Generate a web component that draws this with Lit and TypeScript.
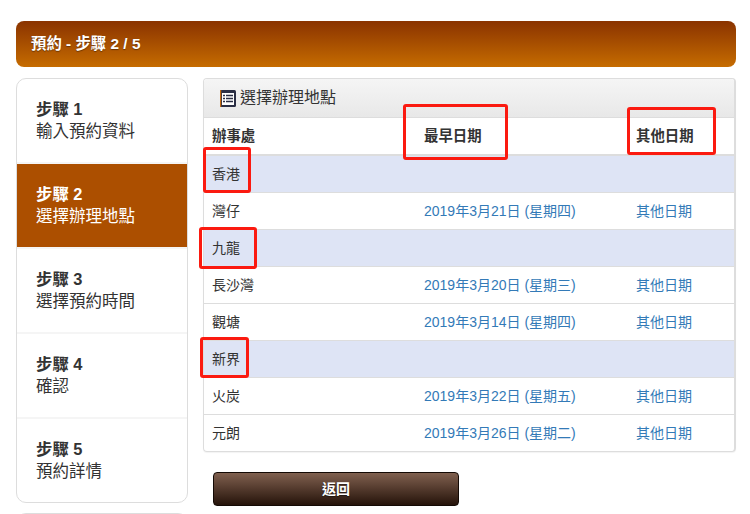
import { LitElement, html, css } from "lit";
import { customElement } from "lit/decorators.js";

const steps = [
  ["步驟 1", "輸入預約資料"],
  ["步驟 2", "選擇辦理地點"],
  ["步驟 3", "選擇預約時間"],
  ["步驟 4", "確認"],
  ["步驟 5", "預約詳情"],
];

type Row = { group: string } | { name: string; date: string };
const rows: Row[] = [
  { group: "香港" },
  { name: "灣仔", date: "2019年3月21日 (星期四)" },
  { group: "九龍" },
  { name: "長沙灣", date: "2019年3月20日 (星期三)" },
  { name: "觀塘", date: "2019年3月14日 (星期四)" },
  { group: "新界" },
  { name: "火炭", date: "2019年3月22日 (星期五)" },
  { name: "元朗", date: "2019年3月26日 (星期二)" },
];

const marks = [
  [203, 147, 48, 46],
  [199, 227, 58, 42],
  [200, 337, 49, 41],
  [403, 104, 105, 56],
  [627, 107, 89, 48],
];

@customElement("app-root")
export class AppRoot extends LitElement {
  static styles = css`
    :host {
      display: block;
      position: relative;
      width: 750px;
      height: 514px;
      overflow: hidden;
      box-sizing: border-box;
      padding: 21px 14px 0 16px;
      background: #fff;
      color: #333;
      font-family: "Liberation Sans", "Noto Sans CJK TC", sans-serif;
      font-size: 14px;
      line-height: 20px;
    }
    * { box-sizing: border-box; }
    .banner {
      height: 46px;
      border-radius: 8px;
      background: linear-gradient(#8a3300, #c66c00);
      color: #fff;
      font-size: 15.4px;
      font-weight: bold;
      padding: 0 15px 1px;
      display: flex;
      align-items: center;
      text-shadow: 0 1px 1px rgba(0, 0, 0, 0.4);
      margin-bottom: 11px;
    }
    .main { display: flex; gap: 15px; align-items: flex-start; }
    .side { width: 172px; flex: none; }
    .steps {
      border: 1px solid #ddd;
      border-radius: 10px;
      overflow: hidden;
      background: #fff;
    }
    .step {
      height: 83px;
      padding: 19px 19px 0;
      font-size: 16.5px;
      line-height: 22px;
      border-top: 0 solid #f5f5f5;
    }
    .step + .step { height: 85px; border-top-width: 2px; }
    .step b { display: block; font-size: 16.4px; }
    .step.on { background: #ac4f00; color: #fff; }
    .next {
      height: 30px;
      margin-top: 10px;
      border: 1px solid #ddd;
      border-radius: 10px;
    }
    .right { width: 533px; flex: none; }
    .panel {
      border: 1px solid #ddd;
      border-right-width: 2px;
      border-radius: 4px;
      overflow: hidden;
      box-shadow: 0 1px 1px rgba(0, 0, 0, 0.05);
    }
    .head {
      height: 39px;
      display: flex;
      align-items: center;
      gap: 4px;
      padding: 0 16px;
      font-size: 16px;
      background: linear-gradient(#f5f5f5, #e8e8e8);
      border-bottom: 1px solid #ddd;
    }
    .head svg { flex: none; width: 16px; height: 17px; }
    table {
      width: 100%;
      table-layout: fixed;
      border-collapse: separate;
      border-spacing: 0;
    }
    th, td {
      text-align: left;
      padding: 8px;
      height: 37px;
      border-bottom: 1px solid #ddd;
      font-weight: normal;
    }
    th { font-size: 14.4px; font-weight: bold; height: 38px; border-bottom-width: 2px; }
    th:nth-child(1) { width: 212px; }
    th:nth-child(2) { width: 212px; }
    tr:last-child td { border-bottom: 0; height: 36px; }
    tr.group td { background: #dee4f5; }
    a { color: #337ab7; text-decoration: none; }
    .btn {
      display: block;
      width: 246px;
      height: 34px;
      margin: 20px 0 0 10px;
      padding: 0 0 2px;
      border: 1px solid #140a05;
      border-radius: 4px;
      background: linear-gradient(#80604f, #25130a);
      color: #fff;
      font: bold 14px "Liberation Sans", "Noto Sans CJK TC", sans-serif;
      text-shadow: 0 1px 1px rgba(0, 0, 0, 0.5);
    }
    .mark {
      position: absolute;
      border: 3px solid #fb1a10;
      border-radius: 3px;
      pointer-events: none;
    }
  `;

  render() {
    return html`
      <div class="banner">預約 - 步驟 2 / 5</div>
      <div class="main">
        <div class="side">
          <div class="steps">
            ${steps.map(
              ([t, d], i) => html`<div class="step ${i === 1 ? "on" : ""}"><b>${t}</b>${d}</div>`
            )}
          </div>
          <div class="next"></div>
        </div>
        <div class="right">
          <div class="panel">
            <div class="head">
              <svg viewBox="0 0 16 17" aria-hidden="true">
                <rect x="0" y="0" width="16" height="17" rx="1.5" fill="#2b2f45" />
                <rect x="0" y="0" width="1.2" height="17" fill="#c46a10" />
                <rect x="2" y="3" width="12" height="12" fill="#fff" />
                <path d="M3 5.5h2M6 5.5h7M3 8.5h2M6 8.5h7M3 11.500h2M6 11.500h7" stroke="#2b2f45" stroke-width="1.600" fill="none" />
              </svg>
              選擇辦理地點
            </div>
            <table>
              <tr><th>辦事處</th><th>最早日期</th><th>其他日期</th></tr>
              ${rows.map((r) =>
                "group" in r
                  ? html`<tr class="group"><td>${r.group}</td><td></td><td></td></tr>`
                  : html`<tr>
                      <td>${r.name}</td>
                      <td><a href="#">${r.date}</a></td>
                      <td><a href="#">其他日期</a></td>
                    </tr>`
              )}
            </table>
          </div>
          <button class="btn">返回</button>
        </div>
      </div>
      ${marks.map(
        ([x, y, w, h]) =>
          html`<div class="mark" style="left:${x}px;top:${y}px;width:${w}px;height:${h}px"></div>`
      )}
    `;
  }
}
